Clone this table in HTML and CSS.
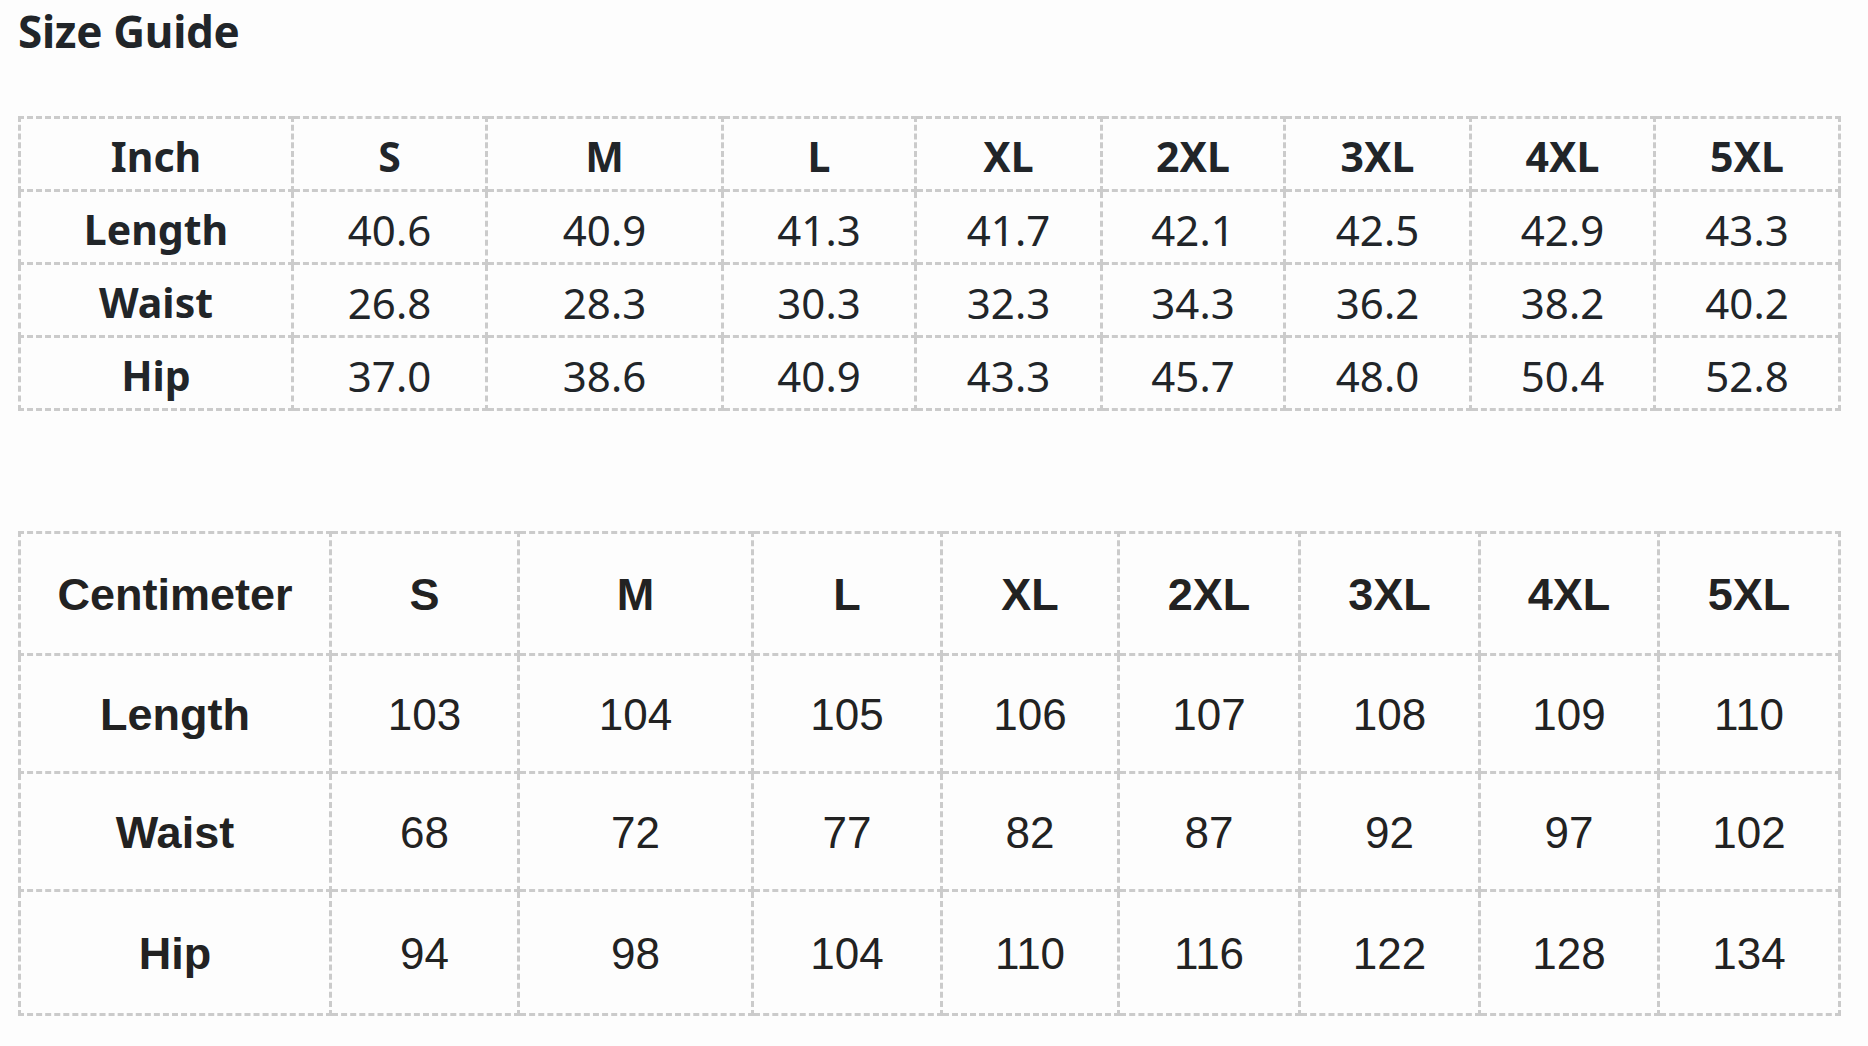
FILE: index.html
```html
<!DOCTYPE html>
<html lang="en">
<head>
<meta charset="utf-8">
<title>Size Guide</title>
<link rel="stylesheet" href="styles.css">
</head>
<body>
<main class="page">
  <h1 class="title">Size Guide</h1>

  <table class="chart chart-inch">
    <colgroup>
      <col class="c1"><col class="c2"><col class="c3"><col class="c4"><col class="c5"><col class="c6"><col class="c7"><col class="c8"><col class="c9">
    </colgroup>
    <tr><th>Inch</th><th>S</th><th>M</th><th>L</th><th>XL</th><th>2XL</th><th>3XL</th><th>4XL</th><th>5XL</th></tr>
    <tr><th>Length</th><td>40.6</td><td>40.9</td><td>41.3</td><td>41.7</td><td>42.1</td><td>42.5</td><td>42.9</td><td>43.3</td></tr>
    <tr><th>Waist</th><td>26.8</td><td>28.3</td><td>30.3</td><td>32.3</td><td>34.3</td><td>36.2</td><td>38.2</td><td>40.2</td></tr>
    <tr><th>Hip</th><td>37.0</td><td>38.6</td><td>40.9</td><td>43.3</td><td>45.7</td><td>48.0</td><td>50.4</td><td>52.8</td></tr>
  </table>

  <table class="chart chart-cm">
    <colgroup>
      <col class="c1"><col class="c2"><col class="c3"><col class="c4"><col class="c5"><col class="c6"><col class="c7"><col class="c8"><col class="c9">
    </colgroup>
    <tr class="row-head"><th>Centimeter</th><th>S</th><th>M</th><th>L</th><th>XL</th><th>2XL</th><th>3XL</th><th>4XL</th><th>5XL</th></tr>
    <tr class="row-mid"><th>Length</th><td>103</td><td>104</td><td>105</td><td>106</td><td>107</td><td>108</td><td>109</td><td>110</td></tr>
    <tr class="row-mid"><th>Waist</th><td>68</td><td>72</td><td>77</td><td>82</td><td>87</td><td>92</td><td>97</td><td>102</td></tr>
    <tr class="row-last"><th>Hip</th><td>94</td><td>98</td><td>104</td><td>110</td><td>116</td><td>122</td><td>128</td><td>134</td></tr>
  </table>
</main>
</body>
</html>
```

FILE: styles.css
```css
html, body {
  margin: 0;
  padding: 0;
  background: #fdfdfd;
}

.page {
  padding: 3px 27px 0 18px;
  color: #212529;
}

.title {
  margin: 0;
  font-family: "Noto Sans", "Open Sans", sans-serif;
  font-weight: 700;
  font-size: 44px;
  line-height: 57px;
  letter-spacing: -0.3px;
}

.chart {
  border-collapse: collapse;
  table-layout: fixed;
  width: 1823px;
  border: 3px dashed #cbcbcb;
}

.chart th,
.chart td {
  border: 3px dashed #cbcbcb;
  padding: 0;
  text-align: center;
  vertical-align: middle;
}

/* Inch table */
.chart-inch {
  margin-top: 56px;
  font-family: "Noto Sans", "Open Sans", sans-serif;
  color: #212529;
}

.chart-inch th,
.chart-inch td {
  height: 66px;
  padding-top: 4px;
}

.chart-inch th {
  font-weight: 700;
  font-size: 41px;
}

.chart-inch td {
  font-weight: 400;
  font-size: 42px;
}

.chart-inch .c1 { width: 273px; }
.chart-inch .c2 { width: 194px; }
.chart-inch .c3 { width: 236px; }
.chart-inch .c4 { width: 193px; }
.chart-inch .c5 { width: 186px; }
.chart-inch .c6 { width: 183px; }
.chart-inch .c7 { width: 186px; }
.chart-inch .c8 { width: 184px; }
.chart-inch .c9 { width: 185px; }

/* Centimeter table */
.chart-cm {
  margin-top: 120px;
  font-family: "Liberation Sans", Arial, sans-serif;
  color: #222222;
}

.chart-cm th,
.chart-cm td {
  padding-top: 2px;
}

.chart-cm .row-head th,
.chart-cm .row-head td {
  height: 117px;
}

.chart-cm .row-mid th,
.chart-cm .row-mid td {
  height: 113px;
}

.chart-cm .row-last th,
.chart-cm .row-last td {
  height: 119px;
}

.chart-cm th {
  font-weight: 700;
  font-size: 45px;
}

.chart-cm td {
  font-weight: 400;
  font-size: 44px;
}

.chart-cm .c1 { width: 311px; }
.chart-cm .c2 { width: 188px; }
.chart-cm .c3 { width: 234px; }
.chart-cm .c4 { width: 189px; }
.chart-cm .c5 { width: 177px; }
.chart-cm .c6 { width: 181px; }
.chart-cm .c7 { width: 180px; }
.chart-cm .c8 { width: 179px; }
.chart-cm .c9 { width: 181px; }
```
